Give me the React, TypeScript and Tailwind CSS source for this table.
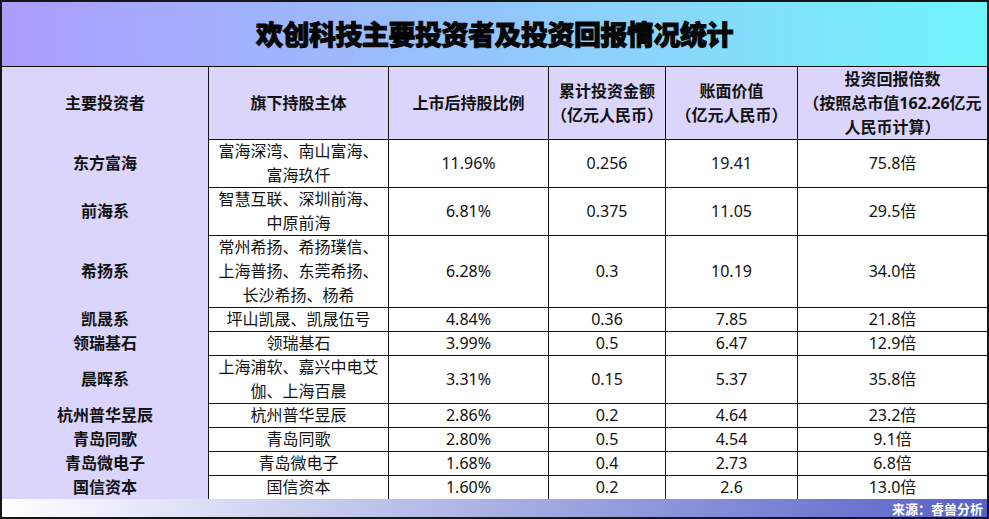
const cols = 'grid grid-cols-[207px_180px_160px_117px_132px_189px]';

type Row = {
  name: string;
  entities: string[];
  ratio: string;
  invest: string;
  book: string;
  multiple: string;
  h: string;
};

const rows: Row[] = [
  { name: '东方富海', entities: ['富海深湾、南山富海、', '富海玖仟'], ratio: '11.96%', invest: '0.256', book: '19.41', multiple: '75.8倍', h: 'h-[48px]' },
  { name: '前海系', entities: ['智慧互联、深圳前海、', '中原前海'], ratio: '6.81%', invest: '0.375', book: '11.05', multiple: '29.5倍', h: 'h-[48px]' },
  { name: '希扬系', entities: ['常州希扬、希扬璞信、', '上海普扬、东莞希扬、', '长沙希扬、杨希'], ratio: '6.28%', invest: '0.3', book: '10.19', multiple: '34.0倍', h: 'h-[72px]' },
  { name: '凯晟系', entities: ['坪山凯晟、凯晟伍号'], ratio: '4.84%', invest: '0.36', book: '7.85', multiple: '21.8倍', h: 'h-[24px]' },
  { name: '领瑞基石', entities: ['领瑞基石'], ratio: '3.99%', invest: '0.5', book: '6.47', multiple: '12.9倍', h: 'h-[24px]' },
  { name: '晨晖系', entities: ['上海浦软、嘉兴中电艾', '伽、上海百晨'], ratio: '3.31%', invest: '0.15', book: '5.37', multiple: '35.8倍', h: 'h-[48px]' },
  { name: '杭州普华昱辰', entities: ['杭州普华昱辰'], ratio: '2.86%', invest: '0.2', book: '4.64', multiple: '23.2倍', h: 'h-[24px]' },
  { name: '青岛同歌', entities: ['青岛同歌'], ratio: '2.80%', invest: '0.5', book: '4.54', multiple: '9.1倍', h: 'h-[24px]' },
  { name: '青岛微电子', entities: ['青岛微电子'], ratio: '1.68%', invest: '0.4', book: '2.73', multiple: '6.8倍', h: 'h-[24px]' },
  { name: '国信资本', entities: ['国信资本'], ratio: '1.60%', invest: '0.2', book: '2.6', multiple: '13.0倍', h: 'h-[24px]' },
];

function Cell({ children, last, className = '' }: { children: React.ReactNode; last?: boolean; className?: string }) {
  return (
    <div
      className={`flex flex-col items-center justify-center text-center whitespace-nowrap border-b border-[#111] ${last ? '' : 'border-r'} ${className}`}
    >
      {children}
    </div>
  );
}

export default function App() {
  return (
    <div
      className="w-[989px] h-[519px] border-2 border-[#161616] flex flex-col bg-white text-[#111] overflow-hidden"
      style={{ fontFamily: '"Noto Sans", "Noto Sans CJK SC", sans-serif' }}
    >
      {/* Title */}
      <div className="h-[65px] shrink-0 border-b border-[#111] bg-gradient-to-r from-[#ab9cfd] via-[#92c6fb] to-[#6ef5f9] flex items-center justify-center">
        <h1
          className="text-[27px] font-black tracking-[-0.5px] text-[#050505] [-webkit-text-stroke:0.9px_#050505]"
          style={{ fontFamily: '"Noto Sans CJK SC", sans-serif' }}
        >
          欢创科技主要投资者及投资回报情况统计
        </h1>
      </div>

      {/* Header */}
      <div className={`${cols} h-[72px] shrink-0 bg-[#dbd4fb] text-[16px] font-bold leading-[24px]`}>
        <Cell>主要投资者</Cell>
        <Cell>旗下持股主体</Cell>
        <Cell>上市后持股比例</Cell>
        <Cell>
          <span>累计投资金额</span>
          <span>（亿元人民币）</span>
        </Cell>
        <Cell>
          <span>账面价值</span>
          <span>（亿元人民币）</span>
        </Cell>
        <Cell last>
          <span>投资回报倍数</span>
          <span>（按照总市值162.26亿元</span>
          <span>人民币计算）</span>
        </Cell>
      </div>

      {/* Body */}
      {rows.map((r) => (
        <div key={r.name} className={`${cols} ${r.h} shrink-0 text-[16px] leading-[24px]`}>
          <Cell className="bg-[#dbd4fb] font-bold">{r.name}</Cell>
          <Cell>
            {r.entities.map((e) => (
              <span key={e}>{e}</span>
            ))}
          </Cell>
          <Cell>{r.ratio}</Cell>
          <Cell>{r.invest}</Cell>
          <Cell>{r.book}</Cell>
          <Cell last>{r.multiple}</Cell>
        </div>
      ))}

      {/* Footer */}
      <div className="flex-1 bg-gradient-to-r from-white via-[#aab0e4] to-[#5960c6] flex items-center justify-end pr-[4px]">
        <span className="text-[13px] font-bold text-white leading-none" style={{ fontFamily: '"Noto Sans CJK SC", sans-serif' }}>
          来源：睿兽分析
        </span>
      </div>
    </div>
  );
}
